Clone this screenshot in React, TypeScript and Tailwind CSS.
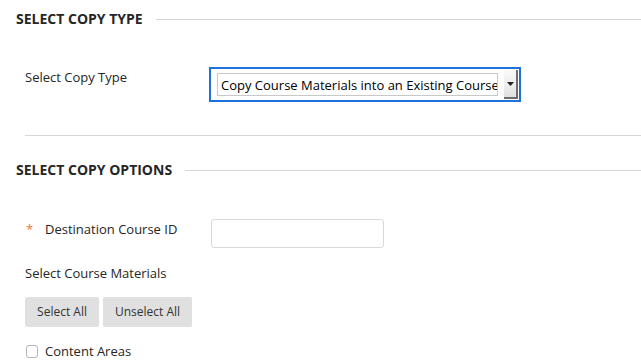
import React from "react";

const font = { fontFamily: '"Open Sans", "Liberation Sans", sans-serif' };

const SectionHeading = ({ title }: { title: string }) => (
  <div className="flex h-5 items-center pl-4">
    <h2 className="text-[14px] font-bold uppercase leading-5 text-[#262626]">
      {title}
    </h2>
    <div className="ml-[13px] h-px flex-1 bg-[#d6d6d6]" />
  </div>
);

const App = () => {
  return (
    <div
      className="h-[360px] w-[641px] overflow-hidden bg-white text-[13px] text-[#262626]"
      style={font}
    >
      <div className="pt-[9px]">
        <SectionHeading title="Select Copy Type" />
      </div>

      {/* copy type row */}
      <div className="mt-[38px] flex items-start pl-[25px]">
        <label className="w-[184px] shrink-0 leading-5">Select Copy Type</label>
        <div className="flex h-[35px] w-[312px] shrink-0 items-center border-2 border-[#1f72dc] bg-white pl-[6px]">
          <div className="flex h-[23px] w-[281px] shrink-0 items-center overflow-hidden border border-[#c8c8c8] pl-[3px] leading-5 whitespace-nowrap text-black">
            Copy Course Materials into an Existing Course
          </div>
          <div className="ml-[6px] flex h-[29px] w-[14px] shrink-0 items-center justify-center border-b-2 border-r-2 border-[#6e6e6e] bg-gradient-to-b from-[#fafafa] to-[#e2e2e2]">
            <svg width="7" height="4" viewBox="0 0 7 4">
              <path d="M0 0h7L3.5 4z" fill="#222" />
            </svg>
          </div>
        </div>
      </div>

      <div className="ml-[25px] mt-[33px] h-px bg-[#d6d6d6]" />

      <div className="mt-[24px]">
        <SectionHeading title="Select Copy Options" />
      </div>

      {/* destination row */}
      <div className="mt-[39px] flex items-start pl-[25px]">
        <div className="flex w-[186px] shrink-0 leading-5">
          <span className="w-5 pl-[1px] text-[13px] text-[#f0781e]">*</span>
          <label>Destination Course ID</label>
        </div>
        <input
          type="text"
          className="h-[29px] w-[173px] rounded-[3px] border border-[#d9d9d9] bg-white outline-none"
        />
      </div>

      <div className="mt-[15px] pl-[25px] leading-5">Select Course Materials</div>

      <div className="mt-[14px] flex gap-1 pl-[25px]">
        <button className="h-[30px] w-[74px] rounded-[2px] bg-[#e0e0e0] text-[12px] text-[#333]">
          Select All
        </button>
        <button className="h-[30px] w-[89px] rounded-[2px] bg-[#e0e0e0] text-[12px] text-[#333]">
          Unselect All
        </button>
      </div>

      <div className="mt-[14px] flex items-center pl-[26px] leading-5">
        <span className="h-[13px] w-[12px] rounded-[3px] border border-[#b5b5b5] bg-white" />
        <span className="ml-[7px]">Content Areas</span>
      </div>
    </div>
  );
};

export default App;
